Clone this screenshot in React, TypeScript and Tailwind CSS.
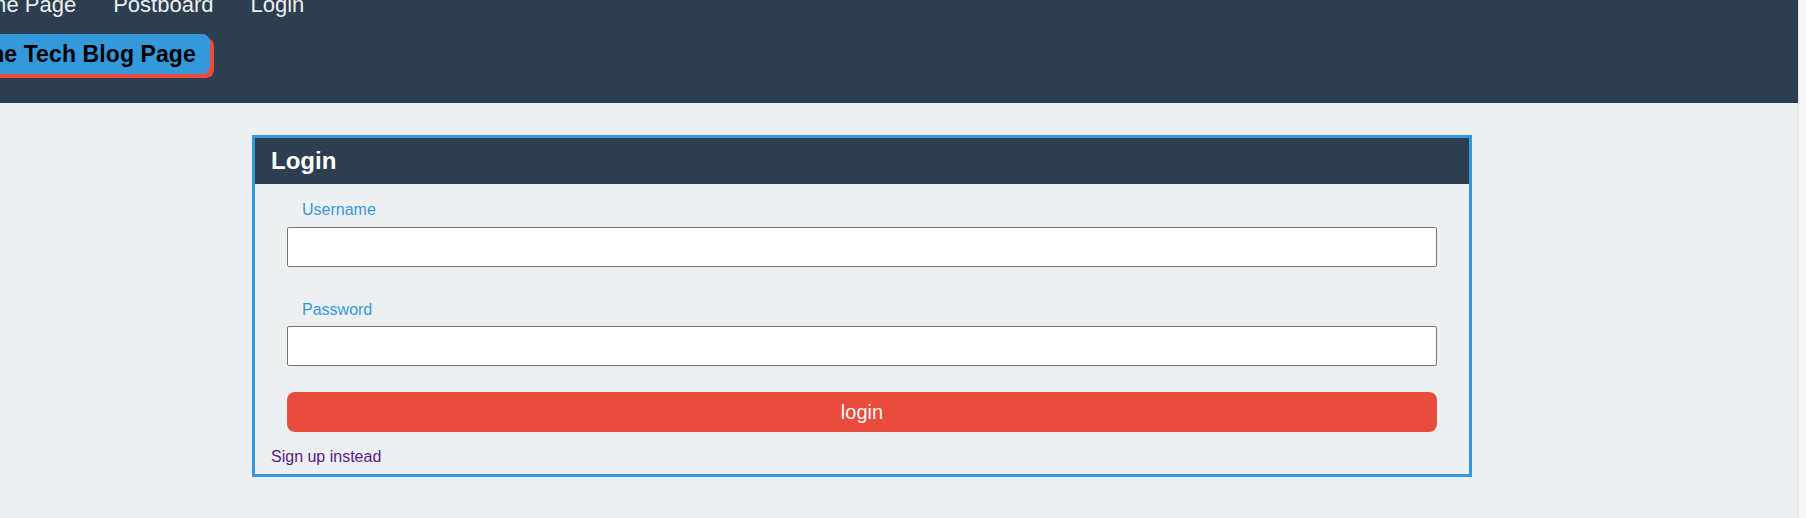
import React from "react";

export default function App() {
  const font = { fontFamily: '"Liberation Sans", Arial, sans-serif' };
  return (
    <div className="flex h-[518px] w-[1806px] overflow-hidden bg-[#ecf0f1]" style={font}>
      <div className="flex w-[1798px] flex-col">
        <header className="h-[103px] shrink-0 overflow-hidden bg-[#2c3e50]">
          <nav className="-mt-[8px] ml-[-40px] flex gap-[37px] text-[22px] leading-[25px] text-[#ecf0f1]">
            <a className="whitespace-nowrap">Home Page</a>
            <a className="whitespace-nowrap">Postboard</a>
            <a className="whitespace-nowrap">Login</a>
          </nav>
          <div className="mt-[17px] ml-[-38px] inline-block whitespace-nowrap rounded-lg bg-[#3498db] px-[14px] py-[7px] text-[23px] font-bold leading-[26px] tracking-[0.1px] text-black shadow-[4px_4px_0_0_#e74c3c]">
            The Tech Blog Page
          </div>
        </header>
        <main className="ml-[252px] mt-[32px] w-[1220px] border-[3px] border-[#3498db]">
          <div className="h-[46px] bg-[#2c3e50] pl-[16px] pt-[9px] text-[24px] font-bold leading-[28px] text-white">
            Login
          </div>
          <form className="px-4 pb-[8px] pt-[17px]" onSubmit={(e) => e.preventDefault()}>
            <div className="mx-4 flex flex-col">
              <label className="mb-[8px] pl-[15px] text-[16px] leading-[18px] text-[#3498db]">Username</label>
              <input type="text" className="h-[40px] rounded-[2px] border border-[#767676] bg-white" />
              <label className="mb-[7px] mt-[34px] pl-[15px] text-[16px] leading-[18px] text-[#3498db]">Password</label>
              <input type="password" className="h-[40px] rounded-[2px] border border-[#767676] bg-white" />
              <button type="submit" className="mt-[26px] h-[40px] rounded-lg bg-[#e74c3c] text-[20px] leading-[23px] text-[#f5f5f5]">
                login
              </button>
            </div>
            <a className="mt-[16px] block text-[16px] leading-[18px] text-[#551a8b]">Sign up instead</a>
          </form>
        </main>
      </div>
      <div className="w-[8px] shrink-0 border-l border-[#e6e6e6] bg-[#f7f7f7]" />
    </div>
  );
}
